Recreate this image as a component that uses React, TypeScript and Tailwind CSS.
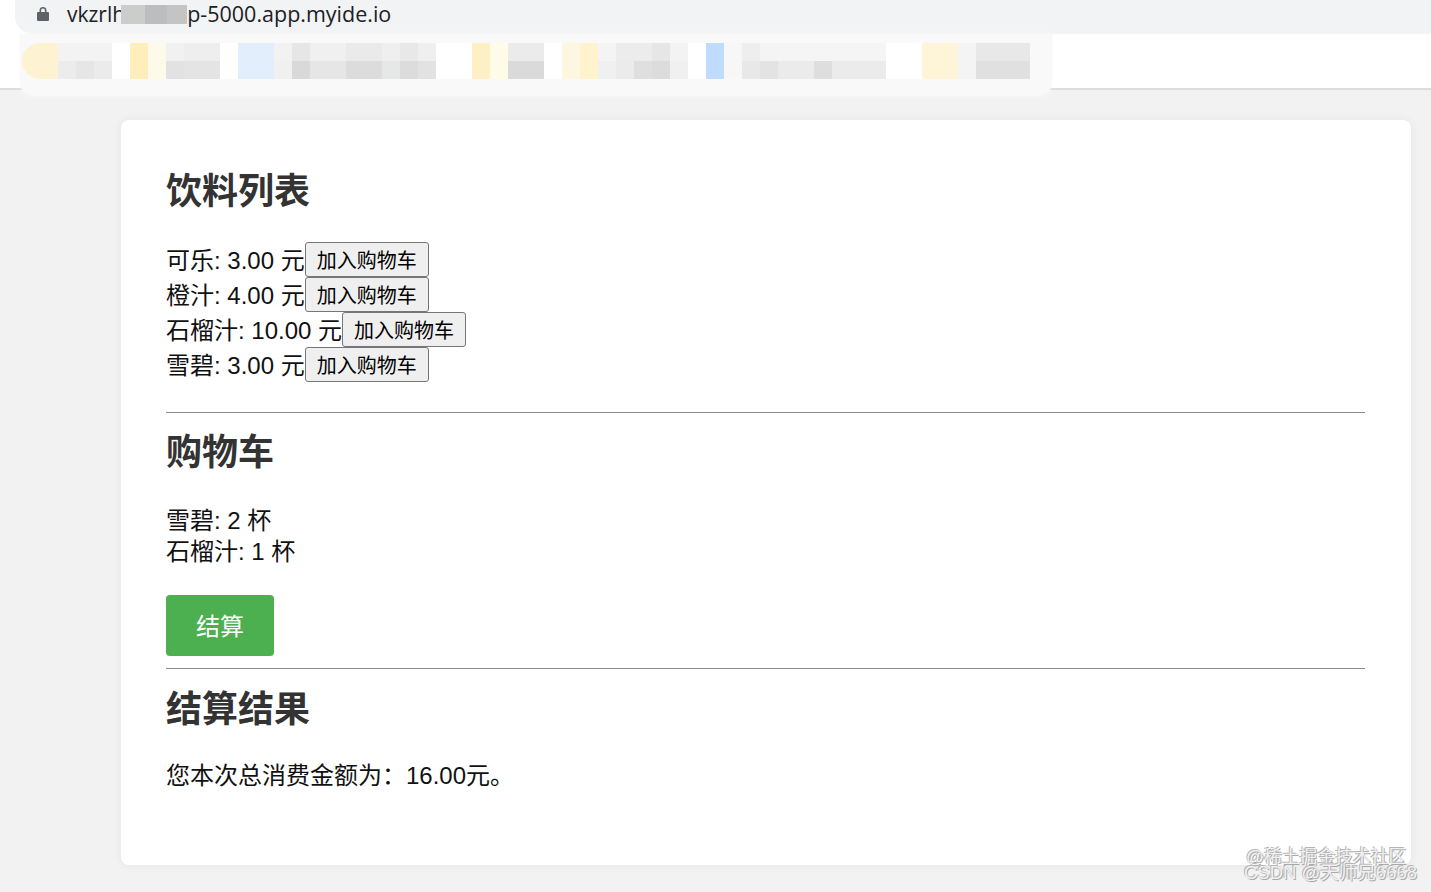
const FONT = "font-['Liberation_Sans','Noto_Sans_CJK_SC',sans-serif]"

const drinks = [
  { name: '可乐', price: '3.00' },
  { name: '橙汁', price: '4.00' },
  { name: '石榴汁', price: '10.00' },
  { name: '雪碧', price: '3.00' },
]

// mosaic blocks that hide the bookmarks
const blocks = [
  { w: 'w-[36px]', top: 'bg-[#fdf3d2]', bottom: 'bg-[#fdf3d2]', round: 'rounded-l-full' },
  { w: 'w-[18px]', top: 'bg-[#f3f3f3]', bottom: 'bg-[#ececec]' },
  { w: 'w-[18px]', top: 'bg-[#f3f3f3]', bottom: 'bg-[#e6e6e6]' },
  { w: 'w-[18px]', top: 'bg-[#f3f3f3]', bottom: 'bg-[#ebebeb]' },
  { w: 'w-[18px]', top: 'bg-white', bottom: 'bg-white' },
  { w: 'w-[18px]', top: 'bg-[#fdeebb]', bottom: 'bg-[#fdeebb]' },
  { w: 'w-[18px]', top: 'bg-[#fefaea]', bottom: 'bg-[#fefaea]' },
  { w: 'w-[18px]', top: 'bg-[#f1f1f1]', bottom: 'bg-[#e2e2e2]' },
  { w: 'w-[36px]', top: 'bg-[#eeeeee]', bottom: 'bg-[#e4e4e4]' },
  { w: 'w-[18px]', top: 'bg-white', bottom: 'bg-white' },
  { w: 'w-[36px]', top: 'bg-[#e2eefb]', bottom: 'bg-[#e2eefb]' },
  { w: 'w-[18px]', top: 'bg-[#f2f2f2]', bottom: 'bg-[#f0f0f0]' },
  { w: 'w-[18px]', top: 'bg-[#e6e6e6]', bottom: 'bg-[#d9d9d9]' },
  { w: 'w-[36px]', top: 'bg-[#f0f0f0]', bottom: 'bg-[#e6e6e6]' },
  { w: 'w-[36px]', top: 'bg-[#eaeaea]', bottom: 'bg-[#dcdcdc]' },
  { w: 'w-[18px]', top: 'bg-[#efefef]', bottom: 'bg-[#e6e8e8]' },
  { w: 'w-[18px]', top: 'bg-[#e8e8e8]', bottom: 'bg-[#dcdcdc]' },
  { w: 'w-[18px]', top: 'bg-[#efefef]', bottom: 'bg-[#e2e2e2]' },
  { w: 'w-[36px]', top: 'bg-white', bottom: 'bg-white' },
  { w: 'w-[18px]', top: 'bg-[#fdf0c4]', bottom: 'bg-[#fdf0c4]' },
  { w: 'w-[18px]', top: 'bg-[#fefbe9]', bottom: 'bg-[#fefbe9]' },
  { w: 'w-[36px]', top: 'bg-[#ebebeb]', bottom: 'bg-[#dadada]' },
  { w: 'w-[18px]', top: 'bg-white', bottom: 'bg-white' },
  { w: 'w-[18px]', top: 'bg-[#fdf6e0]', bottom: 'bg-[#fdf6e0]' },
  { w: 'w-[18px]', top: 'bg-[#fef3cd]', bottom: 'bg-[#fef3cd]' },
  { w: 'w-[18px]', top: 'bg-[#f4f4f4]', bottom: 'bg-[#f0f0f0]' },
  { w: 'w-[18px]', top: 'bg-[#ececec]', bottom: 'bg-[#ebebeb]' },
  { w: 'w-[18px]', top: 'bg-[#ececec]', bottom: 'bg-[#dfdfdf]' },
  { w: 'w-[18px]', top: 'bg-[#e6e6e6]', bottom: 'bg-[#dcdcdc]' },
  { w: 'w-[18px]', top: 'bg-[#f3f3f3]', bottom: 'bg-[#f0f0f0]' },
  { w: 'w-[18px]', top: 'bg-white', bottom: 'bg-white' },
  { w: 'w-[18px]', top: 'bg-[#bfdcfc]', bottom: 'bg-[#bfdcfc]' },
  { w: 'w-[18px]', top: 'bg-[#f7f7f7]', bottom: 'bg-[#f7f7f7]' },
  { w: 'w-[18px]', top: 'bg-[#eeeeee]', bottom: 'bg-[#e8e8e8]' },
  { w: 'w-[18px]', top: 'bg-[#f4f4f4]', bottom: 'bg-[#e3e3e3]' },
  { w: 'w-[36px]', top: 'bg-[#f5f5f5]', bottom: 'bg-[#ebebeb]' },
  { w: 'w-[18px]', top: 'bg-[#f5f5f5]', bottom: 'bg-[#dedede]' },
  { w: 'w-[54px]', top: 'bg-[#f5f5f5]', bottom: 'bg-[#ebebeb]' },
  { w: 'w-[36px]', top: 'bg-white', bottom: 'bg-white' },
  { w: 'w-[36px]', top: 'bg-[#fef5d8]', bottom: 'bg-[#fef5d8]' },
  { w: 'w-[18px]', top: 'bg-[#f4f4f4]', bottom: 'bg-[#f4f4f4]' },
  { w: 'w-[54px]', top: 'bg-[#e8e8e8]', bottom: 'bg-[#e0e0e0]' },
]

function BrowserBar() {
  return (
    <div className="relative h-[90px] border-b-2 border-[#dcdcdc] bg-white">
      <div className="ml-[15px] flex h-[34px] items-center rounded-bl-[18px] bg-[#f1f3f4] pb-[6px] pl-[21px]">
        <svg width="14" height="16" viewBox="0 0 14 16" className="mr-[17px] fill-[#5f6368]">
          <path d="M3.5 6V4.5a3.5 3.5 0 0 1 7 0V6H12a1 1 0 0 1 1 1v7a1 1 0 0 1-1 1H2a1 1 0 0 1-1-1V7a1 1 0 0 1 1-1h1.5zm1.6 0h3.8V4.5a1.9 1.9 0 0 0-3.8 0V6z" />
        </svg>
        <span className="font-['Open_Sans',sans-serif] text-[21px] leading-none text-[#202124]">vkzrlh</span>
        <span className="ml-[-4px] flex h-[19px] w-[66px] shrink-0">
          <span className="w-[24px] bg-[#cccccc]" />
          <span className="w-[22px] bg-[#bdbdbd]" />
          <span className="w-[20px] bg-[#c4c4c4]" />
        </span>
        <span className="font-['Open_Sans',sans-serif] text-[21.5px] leading-none text-[#202124]">p-5000.app.myide.io</span>
      </div>

      {/* blurred bookmarks sit over the bar and its bottom border */}
      <div className="absolute left-[20px] top-[34px] h-[62px] w-[1032px] rounded-b-[14px] bg-[#f9f9f9] pl-[2px] pt-[9px] shadow-[0_0_4px_#f9f9f9]">
        <div className="flex h-[36px] blur-[0.4px]">
          {blocks.map((b, i) => (
            <div key={i} className={`flex shrink-0 flex-col ${b.w} ${b.round ?? ''}`}>
              <div className={`h-[18px] ${b.top} ${b.round ? 'rounded-tl-[18px]' : ''}`} />
              <div className={`h-[18px] ${b.bottom} ${b.round ? 'rounded-bl-[18px]' : ''}`} />
            </div>
          ))}
        </div>
      </div>
    </div>
  )
}

export default function App() {
  return (
    <div className={`relative h-[892px] overflow-hidden bg-[#f2f2f2] ${FONT}`}>
      <BrowserBar />

      <main className="ml-[121px] mr-[20px] mt-[30px] h-[745px] rounded-[8px] bg-white pl-[45px] pr-[46px] pt-[45px] text-[24px] text-[#111] shadow-[0_0_10px_rgba(0,0,0,0.06)]">
        <h2 className="h-[50px] text-[36px] font-bold leading-[54px] text-[#333]">饮料列表</h2>

        <ul className="mt-[27px]">
          {drinks.map((d) => (
            <li key={d.name} className="flex h-[35px] items-center">
              <span className="pt-[2px] leading-[35px]">
                {d.name}: {d.price} 元
              </span>
              <button className="box-border h-[35px] w-[124px] rounded-[3px] border border-[#767676] bg-[#efefef] pt-[2px] text-center text-[20px] leading-none text-black">
                加入购物车
              </button>
            </li>
          ))}
        </ul>

        <hr className="mt-[30px] border-t border-[#8a8a8a]" />

        <h2 className="mt-[14px] h-[50px] text-[36px] font-bold leading-[52px] text-[#333]">购物车</h2>

        <ul className="mt-[28px] leading-[31px]">
          <li>雪碧: 2 杯</li>
          <li>石榴汁: 1 杯</li>
        </ul>

        <button className="mt-[28px] block h-[61px] w-[108px] rounded-[4px] bg-[#4caf50] pt-[2px] text-[24px] text-white">
          结算
        </button>

        <hr className="mt-[12px] border-t border-[#8a8a8a]" />

        <h2 className="mt-[14px] h-[50px] text-[36px] font-bold leading-[54px] text-[#333]">结算结果</h2>

        <p className="mt-[27px] leading-[31px]">您本次总消费金额为：16.00元。</p>
      </main>

      {/* watermark over the corner of the card */}
      <div className="absolute left-[1244px] top-[849px] w-[187px] whitespace-nowrap leading-[16px] text-[#f0f0f0] [text-shadow:-1px_-1px_0_#b5b5b5,1px_1px_0_#aaa]">
        <div className="pl-[2px] text-[17.8px]">@稀土掘金技术社区</div>
        <div className="text-[18.5px]">CSDN @天师兄6668</div>
      </div>
    </div>
  )
}
